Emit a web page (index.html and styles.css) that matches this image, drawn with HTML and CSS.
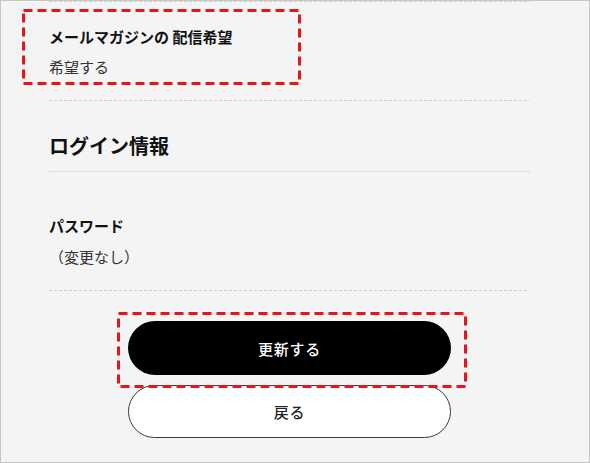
FILE: index.html
```html
<!DOCTYPE html>
<html lang="ja">
<head>
<meta charset="utf-8">
<title>会員情報確認</title>
<link rel="stylesheet" href="styles.css">
</head>
<body>
<div class="frame">
  <div class="content">
    <div class="sep-top"></div>
    <div class="item">
      <div class="item-label">メールマガジンの 配信希望</div>
      <div class="item-value">希望する</div>
    </div>
    <h2 class="section-title">ログイン情報</h2>
    <div class="item item-first">
      <div class="item-label">パスワード</div>
      <div class="item-value">（変更なし）</div>
    </div>
    <div class="actions">
      <button class="btn btn-primary" type="button">更新する</button>
      <button class="btn btn-secondary" type="button">戻る</button>
    </div>
  </div>
  <svg class="mark mark-1" width="279" height="76" viewBox="0 0 279 76"><rect x="1.5" y="1.5" width="276" height="73" fill="none" stroke="#e8131b" stroke-width="3" stroke-dasharray="9 5"/></svg>
  <svg class="mark mark-2" width="350" height="76" viewBox="0 0 350 76"><rect x="1.5" y="1.5" width="347" height="73" fill="none" stroke="#e8131b" stroke-width="3" stroke-dasharray="9 5"/></svg>
</div>
</body>
</html>
```

FILE: styles.css
```css
* { box-sizing: border-box; }
html, body { margin: 0; padding: 0; }
body {
  font-family: "Noto Sans CJK JP", "Noto Sans", sans-serif;
  color: #222;
  background: #f4f4f4;
}
.frame {
  position: relative;
  width: 590px;
  height: 463px;
  border: 1px solid #c6c6c6;
  background: #f4f4f4;
  overflow: hidden;
}
.content {
  width: 481px;
  margin-left: 48px;
}
.sep-top {
  height: 1px;
  background: repeating-linear-gradient(to right, #cfcfcf 0 3px, transparent 3px 5px);
}
.item {
  padding: 24px 0 23px;
  background-image: repeating-linear-gradient(to right, #cfcfcf 0 3px, transparent 3px 5px);
  background-size: 100% 1px;
  background-repeat: no-repeat;
  background-position: left bottom;
  display: flex;
  flex-direction: column;
  gap: 8px;
}
.item-first { padding-top: 43px; gap: 9px; }
.item-label {
  font-size: 15px;
  line-height: 22px;
  font-weight: 700;
  color: #111;
}
.item-value {
  font-size: 15px;
  line-height: 22px;
  color: #333;
}
.section-title {
  margin: 31px 0 0;
  padding-bottom: 11px;
  border-bottom: 1px solid #dcdcdc;
  font-size: 20px;
  line-height: 28px;
  font-weight: 700;
  color: #111;
}
.actions {
  display: flex;
  flex-direction: column;
  align-items: center;
  gap: 10px;
  padding-top: 30px;
}
.btn {
  width: 323px;
  border-radius: 27px;
  font-family: inherit;
  font-size: 15px;
  font-weight: 500;
  letter-spacing: 0.05em;
  cursor: pointer;
}
.btn-primary {
  height: 54px;
  background: #000;
  color: #fff;
  border: none;
}
.btn-secondary {
  height: 53px;
  background: #fff;
  color: #222;
  border: 1px solid #3a3a3a;
}
.mark {
  position: absolute;
  display: block;
}
.mark-1 { left: 21px; top: 8px; }
.mark-2 { left: 116px; top: 311px; }
```
